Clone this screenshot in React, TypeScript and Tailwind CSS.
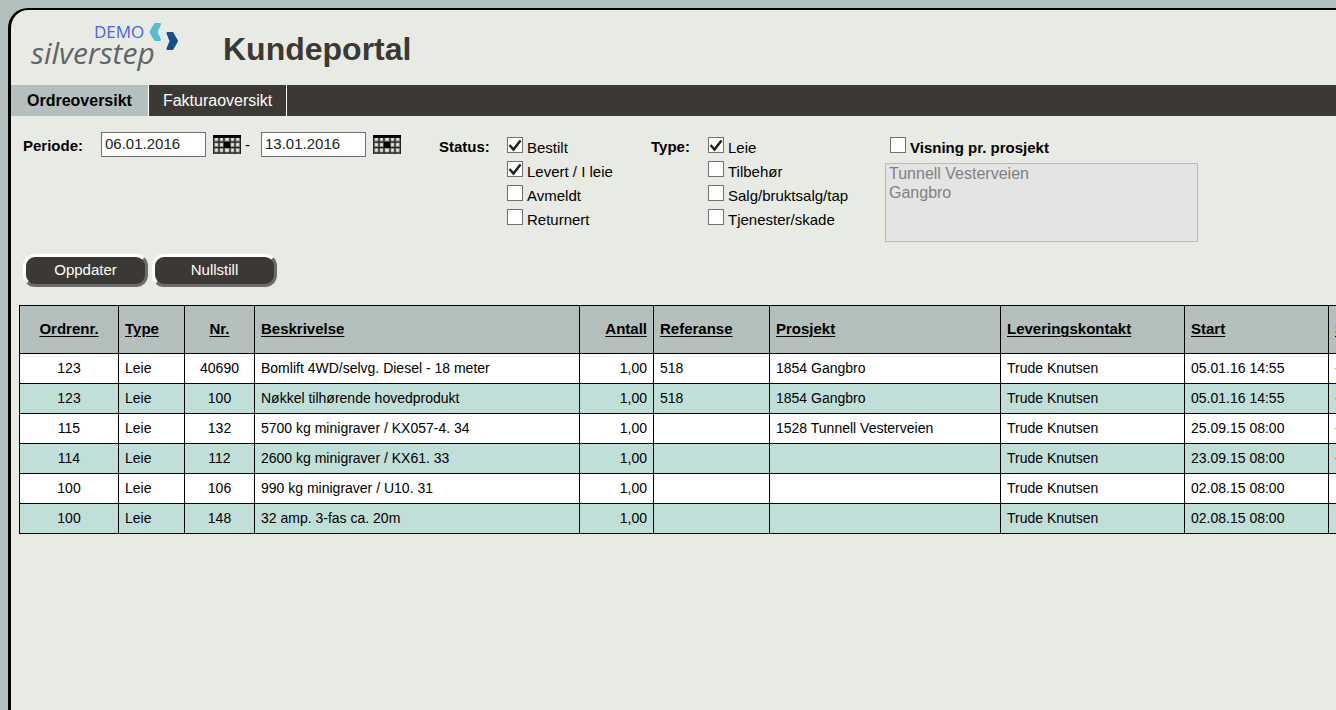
import React from 'react';

type Order = {
    orderNo: string;
    type: string;
    no: string;
    description: string;
    quantity: string;
    reference?: string;
    project?: string;
    contact: string;
    start: string;
    end?: string;
};

const orders: Order[] = [
    { orderNo: '123', type: 'Leie', no: '40690', description: 'Bomlift 4WD/selvg. Diesel - 18 meter', quantity: '1,00', reference: '518', project: '1854 Gangbro', contact: 'Trude Knutsen', start: '05.01.16 14:55', end: '-' },
    { orderNo: '123', type: 'Leie', no: '100', description: 'Nøkkel tilhørende hovedprodukt', quantity: '1,00', reference: '518', project: '1854 Gangbro', contact: 'Trude Knutsen', start: '05.01.16 14:55', end: '-' },
    { orderNo: '115', type: 'Leie', no: '132', description: '5700 kg minigraver / KX057-4. 34', quantity: '1,00', project: '1528 Tunnell Vesterveien', contact: 'Trude Knutsen', start: '25.09.15 08:00', end: '-' },
    { orderNo: '114', type: 'Leie', no: '112', description: '2600 kg minigraver / KX61. 33', quantity: '1,00', contact: 'Trude Knutsen', start: '23.09.15 08:00', end: '-' },
    { orderNo: '100', type: 'Leie', no: '106', description: '990 kg minigraver / U10. 31', quantity: '1,00', contact: 'Trude Knutsen', start: '02.08.15 08:00' },
    { orderNo: '100', type: 'Leie', no: '148', description: '32 amp. 3-fas ca. 20m', quantity: '1,00', contact: 'Trude Knutsen', start: '02.08.15 08:00' },
];

type Column = {
    key: keyof Order;
    label: string;
    width: string;
    align: string;
};

const columns: Column[] = [
    { key: 'orderNo', label: 'Ordrenr.', width: 'w-[99px]', align: 'text-center' },
    { key: 'type', label: 'Type', width: 'w-[66px]', align: 'text-left' },
    { key: 'no', label: 'Nr.', width: 'w-[70px]', align: 'text-center' },
    { key: 'description', label: 'Beskrivelse', width: 'w-[325px]', align: 'text-left' },
    { key: 'quantity', label: 'Antall', width: 'w-[74px]', align: 'text-right' },
    { key: 'reference', label: 'Referanse', width: 'w-[116px]', align: 'text-left' },
    { key: 'project', label: 'Prosjekt', width: 'w-[231px]', align: 'text-left' },
    { key: 'contact', label: 'Leveringskontakt', width: 'w-[184px]', align: 'text-left' },
    { key: 'start', label: 'Start', width: 'w-[144px]', align: 'text-left' },
    { key: 'end', label: 'Slutt', width: 'w-[144px]', align: 'text-left' },
];

const Logo = () => (
    <svg className="h-14 w-[152px] shrink-0" viewBox="0 0 152 56" role="img" aria-label="silverstep">
        <text x="64" y="18" fontSize="17" fill="#4a62f2" fontFamily="'Open Sans', sans-serif">DEMO</text>
        <text x="1" y="44" fontSize="30" fontStyle="italic" fill="#636467" fontFamily="'Open Sans', sans-serif">silverstep</text>
        <path d="M124.500 3h5.500q1.500.3 1 1.500l-3.500 7.500 3.500 7.500q.3 1.200-1 1.500h-5.500l-4.700-8q-.5-1 0-2z" fill="#55bdd8" />
        <path d="M137.500 12h5.500l4.700 8q.5 1 0 2l-4.700 8h-5.500q-1.500-.3-1-1.500l3-7.500-3-7.500q-.5-1.200 1-1.500z" fill="#15508a" />
    </svg>
);

const CalendarButton = ({ label }: { label: string }) => (
    <button type="button" aria-label={label} className="h-[19px] w-7 shrink-0">
        <svg className="block h-[19px] w-7" viewBox="0 0 28 19">
            <rect width="28" height="19" fill="#e4e6e1" />
            <path d="M1 2v17M6 2v17M11 2v17M17 2v17M22 2v17M27 2v17M0 7h28M0 12.500h28M0 18h28" stroke="#777" strokeWidth="2.400" />
            <path d="M.500 2v17M6 2v17M11 2v17M17 2v17M22 2v17M27.500 2v17M0 7h28M0 12.500h28M0 18h28" stroke="#222" strokeWidth="1" />
            <rect width="28" height="3" fill="#000" />
            <rect x="11" y="7" width="6" height="6" fill="#000" />
        </svg>
    </button>
);

type CheckFieldProps = {
    label: string;
    defaultChecked?: boolean;
    bold?: boolean;
};

const CheckField: React.FC<CheckFieldProps> = ({ label, defaultChecked, bold }) => (
    <label className="flex h-6 items-start gap-1">
        <span className="grid size-4 shrink-0">
            <input
                type="checkbox"
                defaultChecked={defaultChecked}
                className="peer col-start-1 row-start-1 size-4 appearance-none border border-[#707070] bg-white"
            />
            <svg className="pointer-events-none invisible col-start-1 row-start-1 size-4 peer-checked:visible" viewBox="0 0 16 16">
                <path d="M2.500 8l4 4.500L13.500 3.500" fill="none" stroke="#212121" strokeWidth="2.500" />
            </svg>
        </span>
        <span className={bold ? 'pt-px font-bold' : 'pt-px'}>{label}</span>
    </label>
);

const DateField = ({ label, value }: { label: string; value: string }) => (
    <input
        type="text"
        aria-label={label}
        defaultValue={value}
        className="h-[25px] w-[105px] border border-[#707070] bg-white px-[3px] pb-0.5 text-[#222]"
    />
);

const ActionButton = ({ label }: { label: string }) => (
    <button
        type="button"
        className="h-[33px] w-[125px] rounded-xl border-3 border-t-white border-r-[#6b6b6b] border-b-[#6b6b6b] border-l-white bg-[#3c3934] pb-px text-white"
    >
        {label}
    </button>
);

const Filters = () => (
    <form className="flex h-[124px] items-start pt-4 pl-3 leading-5">
        <div className="flex w-[416px] shrink-0 items-center">
            <span className="w-[78px] pt-0.5 font-bold">Periode:</span>
            <DateField label="Fra dato" value="06.01.2016" />
            <div className="flex w-[55px] items-center gap-1 pl-[7px]">
                <CalendarButton label="Velg fra dato" />
                <span>-</span>
            </div>
            <DateField label="Til dato" value="13.01.2016" />
            <div className="flex pl-[7px]">
                <CalendarButton label="Velg til dato" />
            </div>
        </div>
        <fieldset className="flex w-[212px] shrink-0 pt-[5px]">
            <span className="w-[68px] font-bold">Status:</span>
            <div>
                <CheckField label="Bestilt" defaultChecked />
                <CheckField label="Levert / I leie" defaultChecked />
                <CheckField label="Avmeldt" />
                <CheckField label="Returnert" />
            </div>
        </fieldset>
        <fieldset className="flex w-[234px] shrink-0 pt-[5px]">
            <span className="w-[57px] font-bold">Type:</span>
            <div>
                <CheckField label="Leie" defaultChecked />
                <CheckField label="Tilbehør" />
                <CheckField label="Salg/bruktsalg/tap" />
                <CheckField label="Tjenester/skade" />
            </div>
        </fieldset>
        <div className="pt-[5px]">
            <div className="pl-[5px]">
                <CheckField label="Visning pr. prosjekt" bold />
            </div>
            <select
                multiple
                disabled
                size={4}
                aria-label="Prosjekter"
                className="mt-0.5 block h-[79px] w-[313px] overflow-hidden border border-[#b9bab9] bg-[#e4e4e4] px-[3px] py-px text-base leading-[18px] text-[#666] opacity-100"
            >
                <option>Tunnell Vesterveien</option>
                <option>Gangbro</option>
            </select>
        </div>
    </form>
);

const OrderTable = () => (
    <table className="w-full min-w-[1453px] table-fixed border-collapse text-black">
        <thead>
            <tr className="h-12 bg-[#b3c0bd]">
                {columns.map(col => (
                    <th key={col.key} className={`border border-black px-1.5 font-bold ${col.width} ${col.align}`}>
                        <a href="#" className="underline underline-offset-2">{col.label}</a>
                    </th>
                ))}
            </tr>
        </thead>
        <tbody className="text-sm">
            {orders.map((order, i) => (
                <tr key={i} className="h-[30px] bg-white even:bg-[#c0dfd8]">
                    {columns.map(col => (
                        <td key={col.key} className={`border border-black px-1.5 pt-0 pb-0.5 ${col.align}`}>
                            {order[col.key]}
                        </td>
                    ))}
                </tr>
            ))}
        </tbody>
    </table>
);

const App = () => (
    <div className="flex min-h-screen overflow-hidden bg-[#b3c0bd] pt-2 pl-2 font-['Liberation_Sans',Arial,sans-serif] text-[15px] text-black">
        <main className="min-w-0 flex-1 overflow-hidden rounded-tl-[20px] border-t-2 border-l-3 border-black bg-[#e8ebe4]">
            <header className="flex h-[75px] items-center gap-[41px] pl-[19px]">
                <Logo />
                <h1 className="pt-0.5 text-[32px] font-bold text-[#3c3934]">Kundeportal</h1>
            </header>
            <nav className="flex h-[31px] bg-[#3c3934] text-base">
                <a href="#" className="flex items-center border-r border-white bg-[#b3c0bd] px-4 font-bold">Ordreoversikt</a>
                <a href="#" className="flex items-center border-r border-white px-3.5 text-white">Fakturaoversikt</a>
            </nav>
            <Filters />
            <div className="flex gap-1 pt-3.5 pl-3">
                <ActionButton label="Oppdater" />
                <ActionButton label="Nullstill" />
            </div>
            <div className="overflow-hidden pt-[18px] pl-2">
                <OrderTable />
            </div>
        </main>
    </div>
);

export default App;
